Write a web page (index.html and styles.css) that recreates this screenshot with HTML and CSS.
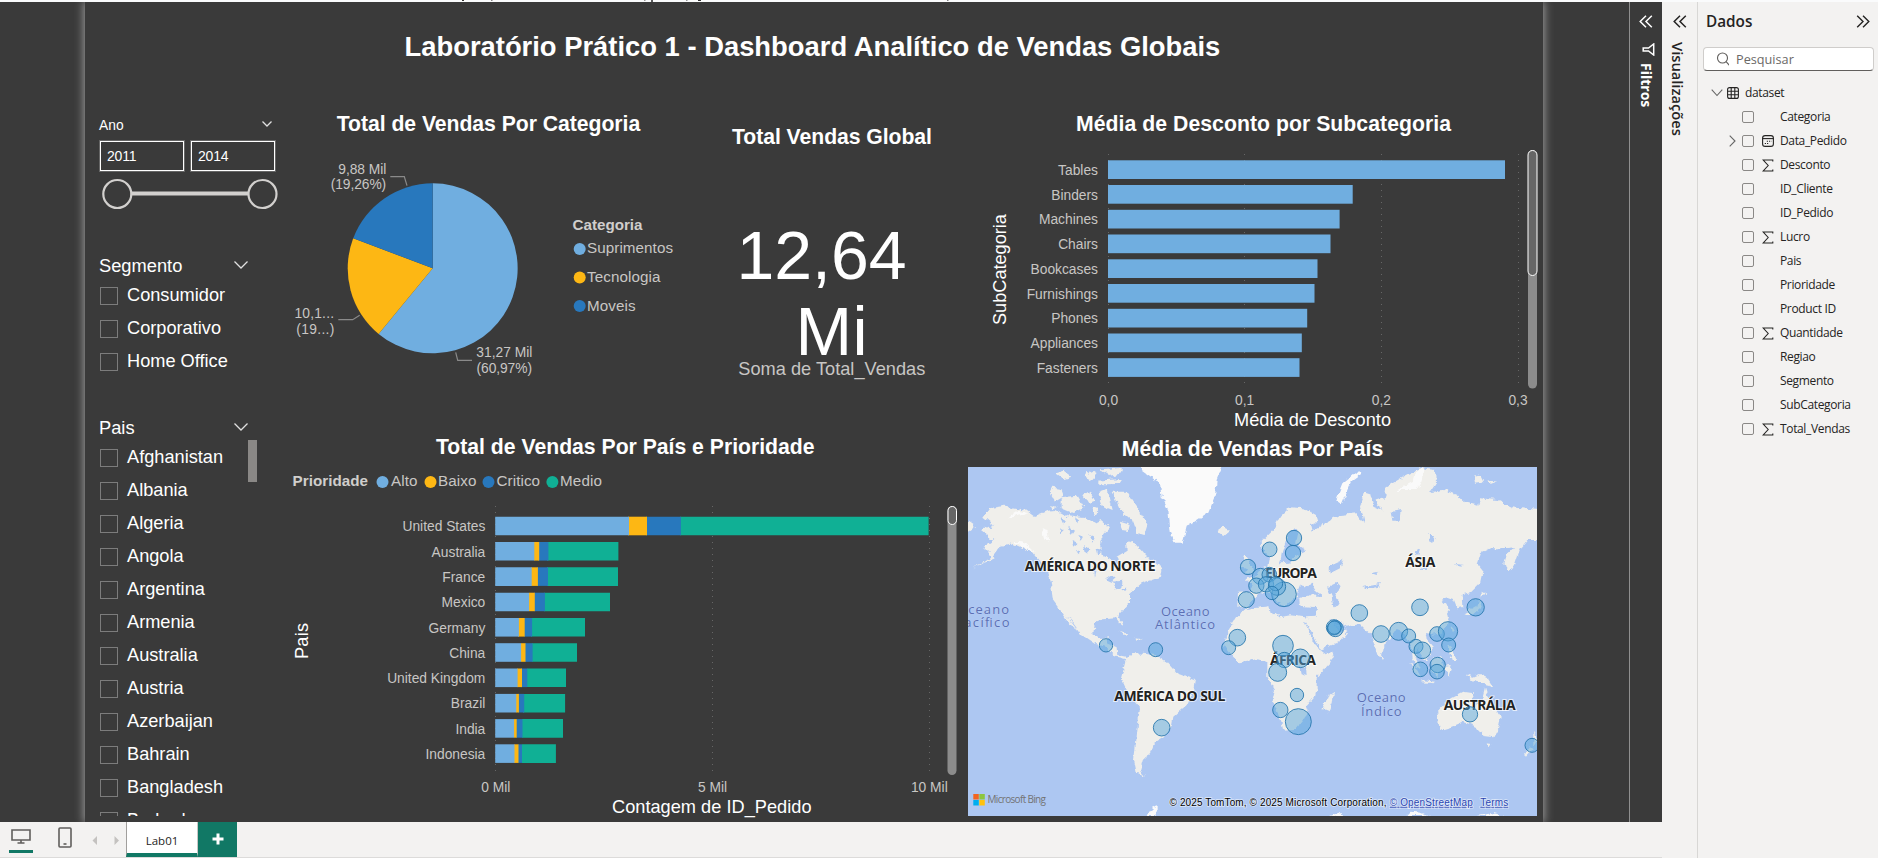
FILE: index.html
```html
<!DOCTYPE html>
<html lang="pt-BR">
<head>
<meta charset="utf-8">
<title>Lab01</title>
<link rel="stylesheet" href="styles.css">
</head>
<body>
<svg class="ribbon-edge" viewBox="0 0 1878 2"><g fill="#333"><rect x="462" y="0" width="2" height="1"/><rect x="491" y="0" width="1.500" height="1" opacity=".6"/><rect x="644" y="0" width="1.500" height="1" opacity=".5"/><rect x="651" y="0" width="2" height="2" opacity=".8"/><rect x="686" y="0" width="1.500" height="1" opacity=".5"/><rect x="698" y="0" width="3" height="1"/><rect x="947" y="0" width="1.500" height="1" opacity=".6"/></g></svg>
<div class="app">
  <div class="report">
    <div class="stage">
      <main class="page">
        <section class="slicers">
          <div class="slicer-head small"><span>Ano</span><svg width="10" height="6" viewBox="0 0 10 6"><path d="M.5.5 5 5 9.500.5"/></svg></div>
          <div class="range"><div class="range-input">2011</div><div class="range-input">2014</div></div>
          <svg class="slider" width="178" height="34" viewBox="0 0 178 34"><path d="M31 16.500H148" stroke-width="4"/><circle cx="17.300" cy="17" r="14"/><circle cx="162.500" cy="17" r="14"/></svg>
          <div class="slicer-head segment"><span>Segmento</span><svg width="14" height="8" viewBox="0 0 14 8"><path d="M.5.5 7 7 13.500.5"/></svg></div>
          <ul class="checks">
            <li><i></i>Consumidor</li><li><i></i>Corporativo</li><li><i></i>Home Office</li>
          </ul>
          <div class="slicer-head country"><span>Pais</span><svg width="14" height="8" viewBox="0 0 14 8"><path d="M.5.5 7 7 13.500.5"/></svg></div>
          <div class="country-list">
            <ul class="checks">
              <li><i></i>Afghanistan</li><li><i></i>Albania</li><li><i></i>Algeria</li><li><i></i>Angola</li><li><i></i>Argentina</li><li><i></i>Armenia</li><li><i></i>Australia</li><li><i></i>Austria</li><li><i></i>Azerbaijan</li><li><i></i>Bahrain</li><li><i></i>Bangladesh</li><li><i></i>Barbados</li>
            </ul>
            <div class="list-thumb"></div>
          </div>
        </section>
        <div class="visuals">
          <h1>Laboratório Prático 1 - Dashboard Analítico de Vendas Globais</h1>
          <div class="row top-row">
            <svg class="chart" width="410" height="340" viewBox="280 90 410 340">
              <text class="title" x="336.700" y="130.500" textLength="303.500">Total de Vendas Por Categoria</text>
              <path fill="#70aee0" d="M432.700 268.300V183.300A85 85 0 1 1 378.600 333.900Z"/>
              <path fill="#fdb714" d="M432.700 268.300 378.600 333.900A85 85 0 0 1 353.200 238.300Z"/>
              <path fill="#2878bd" d="M432.700 268.300 353.200 238.300A85 85 0 0 1 432.700 183.300Z"/>
              <g class="leader"><path d="M390.300 176.700H404.300L407 185.700"/><path d="M338.300 319.700H352.700L359.700 315.300"/><path d="M455.700 352.300 457.700 360.300H472"/></g>
              <g class="label">
                <text x="338.300" y="173.700" textLength="48">9,88 Mil</text><text x="330.700" y="189" textLength="55.500">(19,26%)</text>
                <text x="294.500" y="317.500" textLength="39.500">10,1...</text><text x="296.300" y="333.500" textLength="38">(19...)</text>
                <text x="476.300" y="357.300" textLength="56">31,27 Mil</text><text x="476.500" y="373.300" textLength="55.500">(60,97%)</text>
              </g>
              <g class="legend">
                <text class="bold" x="572.500" y="230" textLength="70">Categoria</text>
                <circle cx="579.700" cy="249" r="6" fill="#70aee0"/><text x="587" y="253.300" textLength="86">Suprimentos</text>
                <circle cx="579.700" cy="277.500" r="6" fill="#fdb714"/><text x="587" y="282" textLength="73.500">Tecnologia</text>
                <circle cx="579.700" cy="306" r="6" fill="#2878bd"/><text x="587" y="311" textLength="48.500">Moveis</text>
              </g>
            </svg>
            <svg class="chart" width="280" height="340" viewBox="690 90 280 340">
              <text class="title" x="732" y="143.700" textLength="200">Total Vendas Global</text>
              <text class="big" x="736.500" y="279" textLength="170">12,64</text>
              <text class="big" x="795.500" y="355.300" textLength="72">Mi</text>
              <text class="caption" x="738.300" y="375" textLength="187">Soma de Total_Vendas</text>
            </svg>
            <svg class="chart" width="572" height="340" viewBox="970 90 572 340">
              <text class="title" x="1076" y="130.500" textLength="375">Média de Desconto por Subcategoria</text>
              <g class="grid"><path d="M1108.500 154V388"/><path d="M1244.500 154V388"/><path d="M1381.500 154V388"/><path d="M1518.500 154V388"/></g>
              <g fill="#70aee0">
                <rect x="1108" y="160.300" width="397" height="18.700"/><rect x="1108" y="185" width="244.700" height="18.700"/><rect x="1108" y="209.800" width="231.600" height="18.700"/><rect x="1108" y="234.500" width="222.500" height="18.700"/><rect x="1108" y="259.300" width="209.500" height="18.700"/><rect x="1108" y="284" width="206.500" height="18.700"/><rect x="1108" y="308.800" width="199.200" height="18.700"/><rect x="1108" y="333.500" width="193.800" height="18.700"/><rect x="1108" y="358.200" width="191.500" height="18.700"/>
              </g>
              <g class="label end">
                <text x="1098" y="175">Tables</text><text x="1098" y="199.700">Binders</text><text x="1098" y="224.300">Machines</text><text x="1098" y="249">Chairs</text><text x="1098" y="274">Bookcases</text><text x="1098" y="298.700">Furnishings</text><text x="1098" y="323">Phones</text><text x="1098" y="348">Appliances</text><text x="1098" y="373">Fasteners</text>
              </g>
              <g class="label mid"><text x="1108.500" y="405">0,0</text><text x="1244.700" y="405">0,1</text><text x="1381.400" y="405">0,2</text><text x="1518" y="405">0,3</text></g>
              <text class="axis" x="1234" y="426" textLength="157">Média de Desconto</text>
              <text class="axis" transform="translate(1006 325) rotate(-90)" textLength="111">SubCategoria</text>
              <rect x="1528" y="150" width="9" height="238.500" rx="4.500" fill="#8c8c8c"/><rect x="1528" y="150.500" width="9" height="125" rx="4.500" fill="#666" stroke="#fff"/>
            </svg>
          </div>
          <div class="row bottom-row">
            <svg class="chart" width="688" height="392" viewBox="280 430 688 392">
              <text class="title" x="436" y="453.500" textLength="378.500">Total de Vendas Por País e Prioridade</text>
              <g class="legend">
                <text class="bold" x="292.500" y="486" textLength="75.500">Prioridade</text>
                <circle cx="382.500" cy="482" r="6" fill="#70aee0"/><text x="391" y="486" textLength="26.500">Alto</text>
                <circle cx="430.500" cy="482" r="6" fill="#fdb714"/><text x="438" y="486" textLength="38.500">Baixo</text>
                <circle cx="488.500" cy="482" r="6" fill="#2878bd"/><text x="496.500" y="486" textLength="43.500">Critico</text>
                <circle cx="552.400" cy="482" r="6" fill="#10b095"/><text x="560" y="486" textLength="42">Medio</text>
              </g>
              <g class="grid"><path d="M495.500 506V775"/><path d="M712.500 506V775"/><path d="M929.500 506V775"/></g>
              <g fill="#10b095"><path d="M680 516.700H928.600V535.300H680z"/><path d="M547 542H618.400V560.600H547z"/><path d="M547 567.300H618V585.900H547z"/><path d="M544 592.700H610V611.200H544z"/><path d="M531 618H585V636.600H531z"/><path d="M532 643.200H577V661.800H532z"/><path d="M527 668.500H566V687.100H527z"/><path d="M523 693.900H565.100V712.500H523z"/><path d="M522 719.100H563V737.700H522z"/><path d="M522 744.300H555.900V762.900H522z"/></g>
              <g fill="#2878bd"><path d="M646 516.700H680.900V535.300H646z"/><path d="M538 542H548.400V560.600H538z"/><path d="M537 567.300H548V585.900H537z"/><path d="M534 592.700H544.900V611.200H534z"/><path d="M524 618H532.100V636.600H524z"/><path d="M525 643.200H532.600V661.800H525z"/><path d="M521 668.500H527.300V687.100H521z"/><path d="M518 693.900H524.200V712.500H518z"/><path d="M516 719.100H522.500V737.700H516z"/><path d="M518 744.300H522V762.900H518z"/></g>
              <g fill="#fdb714"><path d="M628 516.700H647V535.300H628z"/><path d="M534 542H539.200V560.600H534z"/><path d="M531 567.300H537.900V585.900H531z"/><path d="M529 592.700H534.800V611.200H529z"/><path d="M518 618H524.700V636.600H518z"/><path d="M521 643.200H525.500V661.800H521z"/><path d="M517 668.500H522V687.100H517z"/><path d="M516 693.900H518.900V712.500H516z"/><path d="M514 719.100H516.700V737.700H514z"/><path d="M514 744.300H518.500V762.900H514z"/></g>
              <g fill="#70aee0"><path d="M495.200 516.700H629V535.300H495.200z"/><path d="M495.200 542H534.300V560.600H495.200z"/><path d="M495.200 567.300H531.700V585.900H495.200z"/><path d="M495.200 592.700H529.100V611.200H495.200z"/><path d="M495.200 618H518.900V636.600H495.200z"/><path d="M495.200 643.200H521.100V661.800H495.200z"/><path d="M495.200 668.500H517.600V687.100H495.200z"/><path d="M495.200 693.900H516.300V712.500H495.200z"/><path d="M495.200 719.100H514.100V737.700H495.200z"/><path d="M495.200 744.300H514.500V762.900H495.200z"/></g>
              <g class="label end">
                <text x="485.300" y="530.700">United States</text><text x="485.300" y="556.700">Australia</text><text x="485.300" y="581.700">France</text><text x="485.300" y="607">Mexico</text><text x="485.300" y="632.700">Germany</text><text x="485.300" y="657.700">China</text><text x="485.300" y="682.700">United Kingdom</text><text x="485.300" y="708">Brazil</text><text x="485.300" y="733.700">India</text><text x="485.300" y="758.700">Indonesia</text>
              </g>
              <g class="label mid"><text x="495.800" y="792">0 Mil</text><text x="712.600" y="792">5 Mil</text><text x="929.300" y="792">10 Mil</text></g>
              <text class="axis" x="612" y="813" textLength="199.500">Contagem de ID_Pedido</text>
              <text class="axis" transform="translate(308 659) rotate(-90)" textLength="36">Pais</text>
              <rect x="947.500" y="506" width="9" height="269" rx="4.500" fill="#8c8c8c"/><rect x="948" y="506.500" width="8.500" height="18" rx="4.200" fill="#666" stroke="#fff"/>
            </svg>
            <div class="map-visual">
              <h2>Média de Vendas Por País</h2>
              <svg class="map" width="569" height="349" viewBox="968 467 569 349">
                <defs><filter id="coast" x="-5%" y="-5%" width="110%" height="110%"><feTurbulence type="fractalNoise" baseFrequency=".16" numOctaves="3" seed="4" result="n"/><feDisplacementMap in="SourceGraphic" in2="n" scale="6" xChannelSelector="R" yChannelSelector="G"/></filter></defs>
                <rect x="968" y="467" width="569" height="349" fill="#adc7f2"/>
                <g filter="url(#coast)">
                  <g transform="translate(960 460) scale(.33333)" fill="#f0efeb">
                    <path d="M70 170 88 145 135 137 200 150 225 168 262 152 285 150 320 168 375 175 400 190 420 180 450 205 430 225 420 250 425 285 455 300 465 325 475 310 470 290 500 272 498 240 520 245 560 290 605 320 600 350 545 370 510 400 510 430 475 468 488 498 478 492 466 475 430 478 405 488 400 520 420 540 450 528 443 550 470 562 472 585 505 592 500 598 468 590 440 562 405 552 365 525 340 490 318 465 352 510 326 490 300 450 278 420 272 360 255 325 215 275 160 252 120 262 95 295 40 328 95 287 70 262 100 240 65 212 100 195Z"/>
                    <path d="M24 185 45 200 24 215ZM270 100 280 80 305 85 310 110 285 125ZM305 115 350 110 370 145 340 160 305 145ZM285 40 310 32 335 50 310 58ZM375 50 390 30 410 42 395 60ZM420 28 485 24 485 40 450 48ZM410 62 485 57 480 72 420 73ZM370 105 390 92 405 122 385 130ZM350 190 375 172 392 210 365 222ZM415 100 440 90 455 150 430 140ZM455 95 500 95 530 140 562 190 550 228 530 222 515 180 480 150ZM480 185 512 195 508 213 485 210ZM395 140 415 148 405 165ZM270 135 290 140 280 148Z"/>
                    <path d="M475 515 505 522 500 527ZM520 535 545 537 530 542ZM770 215 790 200 810 210 790 228Z"/>
                    <path d="M500 590 530 580 590 585 620 605 650 640 705 660 700 690 680 735 640 770 635 800 610 830 585 845 570 880 550 895 540 930 552 950 530 938 522 900 530 830 540 740 505 700 483 655Z"/>
                    <path fill="#fafafa" d="M535 10 545 30 570 48 600 70 605 110 625 150 632 215 645 248 668 248 680 200 745 158 765 110 770 60 790 10ZM140 175 175 152 205 160 165 170ZM245 205 262 210 268 245 252 238ZM160 245 190 247 225 278 195 265ZM560 1068 575 1045 590 1035 590 1068Z"/>
                    <path fill="#adc7f2" d="M300 172 318 180 308 192ZM345 172 358 182 350 190ZM325 200 345 212 335 228ZM355 225 372 230 365 242ZM335 240 355 250 340 262ZM385 222 405 230 398 248ZM300 205 312 212 304 220ZM372 255 388 268 378 278ZM410 265 425 270 415 285ZM345 270 362 274 352 282ZM440 345 470 352 455 365 485 362 480 385 470 392 462 370 440 360ZM480 392 505 385 500 395ZM400 315 410 330 405 350Z"/>
                  </g>
                  <g transform="translate(1250 460) scale(.33333)" fill="#f0efeb">
                    <path d="M-38 440-36 395 3 393 6 375-12 358 20 347 32 330 55 320 60 290 40 280 35 245 70 210 90 170 120 142 160 145 200 168 205 185 180 195 185 215 205 203 240 180 270 165 320 160 342 192 330 140 345 98 360 103 370 140 397 152 375 120 405 110 410 80 460 50 510 25 555 30 558 70 540 97 580 90 620 105 640 125 685 137 690 115 740 120 785 142 870 150 870 240 832 240 812 265 795 315 780 335 763 310 770 285 792 262 760 265 720 265 690 280 680 310 698 332 690 370 660 400 638 405 640 440 622 445 612 420 590 412 575 420 590 435 597 470 590 500 570 520 545 525 527 522 530 540 548 560 545 582 525 600 512 582 500 562 497 590 512 628 500 620 488 595 485 560 470 535 455 512 440 507 425 530 405 545 396 590 385 590 370 545 362 522 345 507 330 492 290 500 255 477 240 478 262 497 295 515 270 545 215 568 205 560 185 520 165 482 172 460 200 445 150 438 148 415 130 415 110 435 95 438 60 400 45 395 25 402 10 425-8 445Z"/>
                    <path fill="#fafafa" d="M340 35 305 60 275 130 260 120 280 70 320 38ZM500 30 520 25 515 60 500 90 440 90 490 65ZM470 1068 480 1055 515 1058 540 1068ZM240 1068 270 1058 280 1068ZM680 1068 730 1060 760 1068Z"/>
                    <path d="M672 50 690 45 700 65 675 68ZM712 60 738 65 722 72ZM695 395 712 400 695 412ZM685 415 695 440 670 462 640 462 680 440ZM605 495 615 505 608 520ZM592 555 602 560 618 600 605 600ZM545 598 575 590 580 625 562 648 545 630ZM478 605 495 618 512 650 500 645ZM515 660 555 665 550 670 515 667ZM585 620 605 618 595 650ZM645 640 670 650 690 642 715 655 730 678 705 672 675 665ZM392 587 402 592 400 602Z"/>
                    <path d="M560 760 602 715 640 695 672 700 665 725 692 735 705 685 718 725 752 770 745 805 730 832 700 828 680 800 640 785 605 800 570 810ZM710 850 727 852 718 865ZM850 815 862 840 850 860ZM822 885 840 862 848 868 828 890Z"/>
                    <path fill="#adc7f2" d="M425 155 455 150 450 185 430 185ZM535 225 555 225 545 250ZM235 320 280 300 270 325 240 340ZM340 380 390 372 385 380 350 388ZM490 275 510 265 505 285ZM510 330 535 315 525 330ZM615 312 640 314 625 320ZM365 340 385 335 380 345Z"/>
                  </g>
                  <g transform="translate(1180 500) scale(.33333)" fill="#f0efeb">
                    <path d="M180 335 205 325 240 322 268 318 272 335 300 350 325 342 375 352 385 378 400 405 418 445 440 462 463 458 450 490 410 530 410 570 405 590 378 620 385 640 345 690 310 692 305 670 278 600 285 570 262 530 262 500 262 482 230 478 175 487 150 460 132 435 140 400 155 375ZM440 590 462 575 458 605 445 637 428 630ZM192 165 205 180 220 218 195 225 205 205 185 200Z"/>
                    <path fill="#adc7f2" d="M300 190 305 162 318 120 340 82 352 92 345 130 378 152 340 172 325 188ZM350 280 360 255 385 262 395 248 410 275 430 288 385 286 355 295ZM442 262 470 248 482 262 466 280 480 315 460 322 455 290ZM355 300 362 318 410 322 410 350 380 352 330 346 300 352 272 335 270 318 200 326 222 300 235 284 258 278 290 310 320 322 340 318ZM450 357 470 380 500 392 480 395 460 375ZM372 362 380 368 400 405 420 447 412 445 392 405ZM358 500 378 500 380 525 362 520Z"/>
                  </g>
                </g>
                <g class="ocean">
                  <text x="957" y="613.700" textLength="52">Oceano</text><text x="955" y="627.300" textLength="54.500">Pacífico</text>
                  <text x="1161" y="615.700" textLength="48.500">Oceano</text><text x="1155" y="629.300" textLength="60">Atlântico</text>
                  <text x="1356.700" y="702.300" textLength="49">Oceano</text><text x="1361" y="716" textLength="40.500">Índico</text>
                </g>
                <g class="continent">
                  <text x="1024.700" y="571.300" textLength="131">AMÉRICA DO NORTE</text><text x="1114.300" y="701.300" textLength="111">AMÉRICA DO SUL</text><text x="1265" y="578" textLength="52">EUROPA</text><text x="1405.300" y="566.700" textLength="30">ÁSIA</text><text x="1270" y="664.700" textLength="46">ÁFRICA</text><text x="1443.700" y="710.300" textLength="72">AUSTRÁLIA</text>
                </g>
                <g class="bubbles">
                  <g transform="translate(960 460) scale(.33333)"><circle cx="438" cy="556" r="20"/><circle cx="587" cy="569" r="21"/><circle cx="605" cy="803" r="25"/><circle cx="864" cy="321" r="23"/><circle cx="859" cy="419" r="24"/><circle cx="832" cy="533" r="25"/><circle cx="806" cy="563" r="21"/></g>
                  <g transform="translate(1180 500) scale(.33333)"><circle cx="269" cy="148" r="22"/><circle cx="342" cy="114" r="23"/><circle cx="339" cy="159" r="23"/><circle cx="241" cy="229" r="24"/><circle cx="268" cy="224" r="22"/><circle cx="229" cy="257" r="23"/><circle cx="258" cy="253" r="23"/><circle cx="312" cy="283" r="37"/><circle cx="291" cy="260" r="26"/><circle cx="287" cy="251" r="21"/><circle cx="276" cy="279" r="20"/><circle cx="309" cy="437" r="31"/><circle cx="313" cy="480" r="23"/><circle cx="361" cy="475" r="28"/><circle cx="293" cy="517" r="27"/><circle cx="351" cy="585" r="20"/><circle cx="301" cy="630" r="23"/><circle cx="355" cy="665" r="39"/><circle cx="462" cy="382" r="23"/><circle cx="466" cy="386" r="24"/><circle cx="463" cy="383" r="20"/><circle cx="538" cy="339" r="25"/><circle cx="603" cy="402" r="25"/><circle cx="656" cy="394" r="27"/><circle cx="686" cy="408" r="21"/></g>
                  <g transform="translate(1250 460) scale(.33333)"><circle cx="510" cy="442" r="25"/><circle cx="677" cy="442" r="26"/><circle cx="561" cy="522" r="22"/><circle cx="594" cy="514" r="29"/><circle cx="596" cy="555" r="21"/><circle cx="498" cy="559" r="21"/><circle cx="517" cy="571" r="25"/><circle cx="511" cy="628" r="22"/><circle cx="563" cy="615" r="23"/><circle cx="561" cy="635" r="22"/><circle cx="660" cy="763" r="23"/><circle cx="846" cy="856" r="21"/></g>
                </g>
                <path fill="#f26522" d="M973.300 794h5.500v5.500h-5.500z"/><path fill="#8dc63f" d="M979.300 794h5.500v5.500h-5.500z"/><path fill="#00aeef" d="M973.300 800h5.500v5.500h-5.500z"/><path fill="#ffc20e" d="M979.300 800h5.500v5.500h-5.500z"/>
                <text class="bing" x="987.500" y="803" textLength="58.500">Microsoft Bing</text>
                <g class="credits"><text x="1169.500" y="805.700" textLength="217">© 2025 TomTom, © 2025 Microsoft Corporation,</text><text class="link" x="1389.700" y="805.700" textLength="83">© OpenStreetMap</text><text class="link" x="1480.300" y="805.700" textLength="28">Terms</text></g>
              </svg>
            </div>
          </div>
        </div>
      </main>
      <aside class="filters">
        <svg width="14" height="13" viewBox="0 0 14 13"><path d="M7 .7 1.200 6.500 7 12.300M12.800.7 7 6.500 12.800 12.300"/></svg>
        <svg class="funnel" width="13" height="13" viewBox="0 0 13 13"><path d="M11.700 1V12L6.500 8H1.200V5H6.500Z"/></svg>
        <span>Filtros</span>
      </aside>
    </div>
    <footer class="tabs">
      <div class="mode active"><svg width="20" height="15" viewBox="0 0 20 15"><path d="M1 1H19V11H1ZM10 11V14M6.500 14H13.500"/></svg></div>
      <div class="mode"><svg width="14" height="21" viewBox="0 0 14 21"><rect x="1" y="1" width="12" height="19" rx="1"/><path d="M5.500 17H8.500"/></svg></div>
      <svg class="nav" width="28" height="9" viewBox="0 0 28 9"><path d="M5 0V9L.5 4.500ZM22.500 0V9L27 4.500Z"/></svg>
      <div class="tab">Lab01</div>
      <div class="add"><svg width="12" height="12" viewBox="0 0 12 12"><path d="M6 .5V11.500M.5 6H11.500"/></svg></div>
    </footer>
  </div>
  <aside class="visualizations">
    <svg width="14" height="13" viewBox="0 0 14 13"><path d="M7 .7 1.200 6.500 7 12.300M12.800.7 7 6.500 12.800 12.300"/></svg>
    <span>Visualizações</span>
  </aside>
  <aside class="data">
    <header><b>Dados</b><svg width="14" height="13" viewBox="0 0 14 13"><path d="M1.200.7 7 6.500 1.200 12.300M7 .7 12.800 6.500 7 12.300"/></svg></header>
    <div class="search"><svg width="15" height="15" viewBox="0 0 15 15"><circle cx="8.500" cy="6" r="5"/><path d="M4.900 9.700 1 14" transform="matrix(-1 0 0 1 17 0)"/></svg>Pesquisar</div>
    <div class="table"><svg width="12" height="8" viewBox="0 0 12 8"><path stroke="#666" d="M.7.7 6 6.500 11.300.7"/></svg><svg width="12" height="12" viewBox="0 0 12 12"><rect x=".6" y=".6" width="10.800" height="10.800" rx="2"/><path d="M4.200.6V11.400M7.800.6V11.400M.6 4.200H11.400M.6 7.800H11.400"/></svg><span>dataset</span></div>
    <ul class="fields">
      <li><i></i><span>Categoria</span></li>
      <li class="date"><svg width="7" height="12" viewBox="0 0 7 12"><path stroke="#666" d="M.7.700 6 6 .7 11.300"/></svg><i></i><svg width="12" height="12" viewBox="0 0 12 12"><rect x=".6" y=".6" width="10.800" height="10.800" rx="2.500"/><path d="M.6 3.600H11.400"/><path d="M4.800 6.200H9.500M2.800 8.500H7" stroke-dasharray="1.200 1"/></svg><span>Data_Pedido</span></li>
      <li class="sum"><i></i><svg width="12" height="13" viewBox="0 0 12 13"><path d="M10.800 2.500V1H1.200L6.200 6.500 1.200 12H10.800V10.500"/></svg><span>Desconto</span></li>
      <li><i></i><span>ID_Cliente</span></li>
      <li><i></i><span>ID_Pedido</span></li>
      <li class="sum"><i></i><svg width="12" height="13" viewBox="0 0 12 13"><path d="M10.800 2.500V1H1.200L6.200 6.500 1.200 12H10.800V10.500"/></svg><span>Lucro</span></li>
      <li><i></i><span>Pais</span></li>
      <li><i></i><span>Prioridade</span></li>
      <li><i></i><span>Product ID</span></li>
      <li class="sum"><i></i><svg width="12" height="13" viewBox="0 0 12 13"><path d="M10.800 2.500V1H1.200L6.200 6.500 1.200 12H10.800V10.500"/></svg><span>Quantidade</span></li>
      <li><i></i><span>Regiao</span></li>
      <li><i></i><span>Segmento</span></li>
      <li><i></i><span>SubCategoria</span></li>
      <li class="sum"><i></i><svg width="12" height="13" viewBox="0 0 12 13"><path d="M10.800 2.500V1H1.200L6.200 6.500 1.200 12H10.800V10.500"/></svg><span>Total_Vendas</span></li>
    </ul>
  </aside>
</div>
</body>
</html>
```
FILE: styles.css
```css
* { box-sizing: border-box; }
body { margin: 0; width: 1878px; height: 858px; overflow: hidden; display: flex; flex-direction: column; background: #f3f2f1; font-family: "Liberation Sans", Arial, sans-serif; color: #fff; }
ul { list-style: none; margin: 0; padding: 0; }
svg { display: block; flex: none; }
.ribbon-edge { width: 1878px; height: 2px; background: #fafbfc; }
.app { display: flex; flex: 1; min-height: 0; }
.report { width: 1662px; display: flex; flex-direction: column; }
.stage { height: 820px; display: flex; background: #3a3a3a; overflow: hidden; }
.page { width: 1458px; height: 820px; margin-left: 85px; display: flex; background: #3a3a3a; box-shadow: 0 0 9px 1px #a0a0a0; }

/* slicers */
.slicers { width: 195px; height: 815px; padding: 116px 0 0 15px; overflow: hidden; }
.slicer-head { display: flex; justify-content: space-between; width: 148px; height: 22px; font-size: 18.300px; line-height: 22px; }
.slicer-head span { margin-left: -1px; }
.slicer-head svg { margin-top: 6px; }
.slicer-head path { fill: none; stroke: #e0e0e0; stroke-width: 1.300; }
.slicer-head.small { width: 172px; height: 16px; font-size: 13.800px; line-height: 16px; }
.slicer-head.small svg { margin-top: 3px; }
.slicer-head.segment { margin-top: 44px; }
.slicer-head.country { margin-top: 38px; }
.range { display: flex; gap: 7px; margin-top: 7px; }
.range-input { width: 84px; height: 30px; border: 1px solid #fff; outline: 1px solid #666; padding-left: 6px; font-size: 14px; line-height: 29px; letter-spacing: -.2px; }
.slider { margin-top: 6px; fill: none; stroke: #d2d0ce; stroke-width: 2.200; }
.checks { margin-top: 3px; width: 148px; }
.checks li { display: flex; height: 33px; font-size: 18.200px; line-height: 30px; white-space: nowrap; }
.checks i { width: 18px; height: 18px; margin: 7px 9px 0 0; border: 1px solid #7c7c7c; flex: none; }
.country-list { display: flex; height: 377px; overflow: hidden; }
.country-list .checks { margin-top: 3px; }
.list-thumb { width: 9px; height: 42px; margin-top: 1px; background: #8a8886; }

/* visuals */
.visuals { width: 1263px; display: flex; flex-direction: column; }
h1 { height: 88px; margin: 0; padding-left: 124.500px; font-size: 27.380px; line-height: 89px; white-space: nowrap; }
.row { display: flex; }
.top-row { height: 340px; }
.bottom-row { height: 392px; }
.chart { font-size: 13.800px; }
.title { font-size: 21.200px; font-weight: bold; fill: #fff; }
.label { font-size: 13.800px; fill: #c8c6c4; }
.legend { font-size: 15.200px; fill: #c8c6c4; }
.bold { font-weight: bold; fill: #d0cecc; }
.end { text-anchor: end; }
.mid { text-anchor: middle; }
.axis { font-size: 18.200px; fill: #fff; }
.caption { font-size: 18.200px; fill: #c8c6c4; }
.big { font-size: 68px; fill: #fff; }
.leader { fill: none; stroke: #8a8a8a; stroke-width: 1.200; }
.grid { fill: none; stroke: #666; stroke-dasharray: 1 5; }
.map-visual { width: 569px; }
h2 { height: 37px; margin: 0; text-align: center; font-size: 21.200px; line-height: 37px; }
.ocean { font: 13px "Open Sans", "Noto Sans", sans-serif; fill: #5b6fb5; stroke: #c0d4f6; stroke-width: .6px; paint-order: stroke; }
.continent { font: bold 14px "Open Sans", "Noto Sans", sans-serif; fill: #222; stroke: #fff; stroke-width: 2px; stroke-opacity: .7; paint-order: stroke; }
.bubbles { fill: #5aa7dc; fill-opacity: .5; stroke: #2575ab; stroke-width: 2.600; }
.bing { font: 10px "Open Sans", sans-serif; fill: #737373; }
.credits { font-size: 10px; fill: #000; stroke: #fff; stroke-width: 1.500px; stroke-opacity: .6; paint-order: stroke; }
.link { fill: #2a45b0; text-decoration: underline; }

/* side panes */
.filters, .visualizations { display: flex; flex-direction: column; align-items: center; font: 600 14.700px/18px "Open Sans", "Noto Sans", sans-serif; }
.filters { width: 33px; margin-left: auto; padding-top: 13px; border-left: 1px solid #8f8f8f; background: #3a3a3a; position: relative; }
.filters svg, .visualizations svg { fill: none; stroke: currentColor; stroke-width: 1.500; }
.filters .funnel { margin: 15px 0 0 4px; }
.filters span, .visualizations span { writing-mode: vertical-rl; }
.filters span { margin-top: 7px; font-size: 14px; font-weight: 700; }
.visualizations { width: 35px; padding-top: 13px; color: #252423; background: #f3f2f1; }
.visualizations span { margin: 14px 3px 0 0; }
.data { width: 181px; border-left: 1px solid #d8d7d5; color: #252423; font: 12px/24px "Open Sans", "Noto Sans", sans-serif; }
.data svg { fill: none; stroke: #252423; stroke-width: 1.100; }
.data header { display: flex; justify-content: space-between; align-items: center; height: 38px; padding: 0 8px; font-size: 15.300px; }
.data header b { font-weight: 600; padding-bottom: 1px; }
.data header svg { margin-top: 1px; stroke-width: 1.400; }
.search { display: flex; align-items: center; gap: 7px; width: 171px; height: 24px; margin: 7px 0 10px 5px; padding-left: 10px; border: 1px solid #cfcdcb; border-bottom-color: #605e5c; border-radius: 4px; background: #fff; color: #6b6967; font-size: 12.700px; }
.search svg { stroke: #605e5c; }
.table, .fields li { display: flex; align-items: center; height: 24px; letter-spacing: -.35px; }
.table { padding-left: 13px; gap: 4px; }
.table span { margin-left: 2px; }
.fields li { position: relative; padding-left: 44px; }
.fields i { width: 12px; height: 12px; border: 1px solid #8a8886; border-radius: 2px; flex: none; }
.fields span { margin-left: 26px; }
.fields .date { padding-left: 31px; }
.fields .date i { margin-left: 6px; }
.fields i + svg { margin-left: 8px; }
.fields svg + span { margin-left: 6px; }

/* page tabs */
.tabs { display: flex; align-items: stretch; height: 36px; background: #f3f2f1; border-bottom: 1px solid #dcdbda; color: #252423; }
.mode { width: 24px; margin-left: 9px; display: flex; justify-content: center; padding-top: 7px; border-bottom: 3px solid transparent; margin-bottom: 4px; }
.mode + .mode { margin-left: 20px; padding-top: 5px; }
.mode svg { fill: none; stroke: #605e5c; stroke-width: 1.600; }
.mode.active { border-bottom-color: #117865; }
.nav { margin: 14px 0 0 15px; fill: #c4c2c0; }
.tab { width: 72px; margin-left: 6px; border-left: 1px solid #a19f9d; border-right: 1px solid #c8c6c4; border-bottom: 4px solid #117865; background: #fff; text-align: center; font: 11.500px/37px "Open Sans", sans-serif; }
.add { width: 39px; background: #117865; display: flex; align-items: center; justify-content: center; padding-bottom: 2px; }
.add svg { fill: none; stroke: #fff; stroke-width: 3; }
```
